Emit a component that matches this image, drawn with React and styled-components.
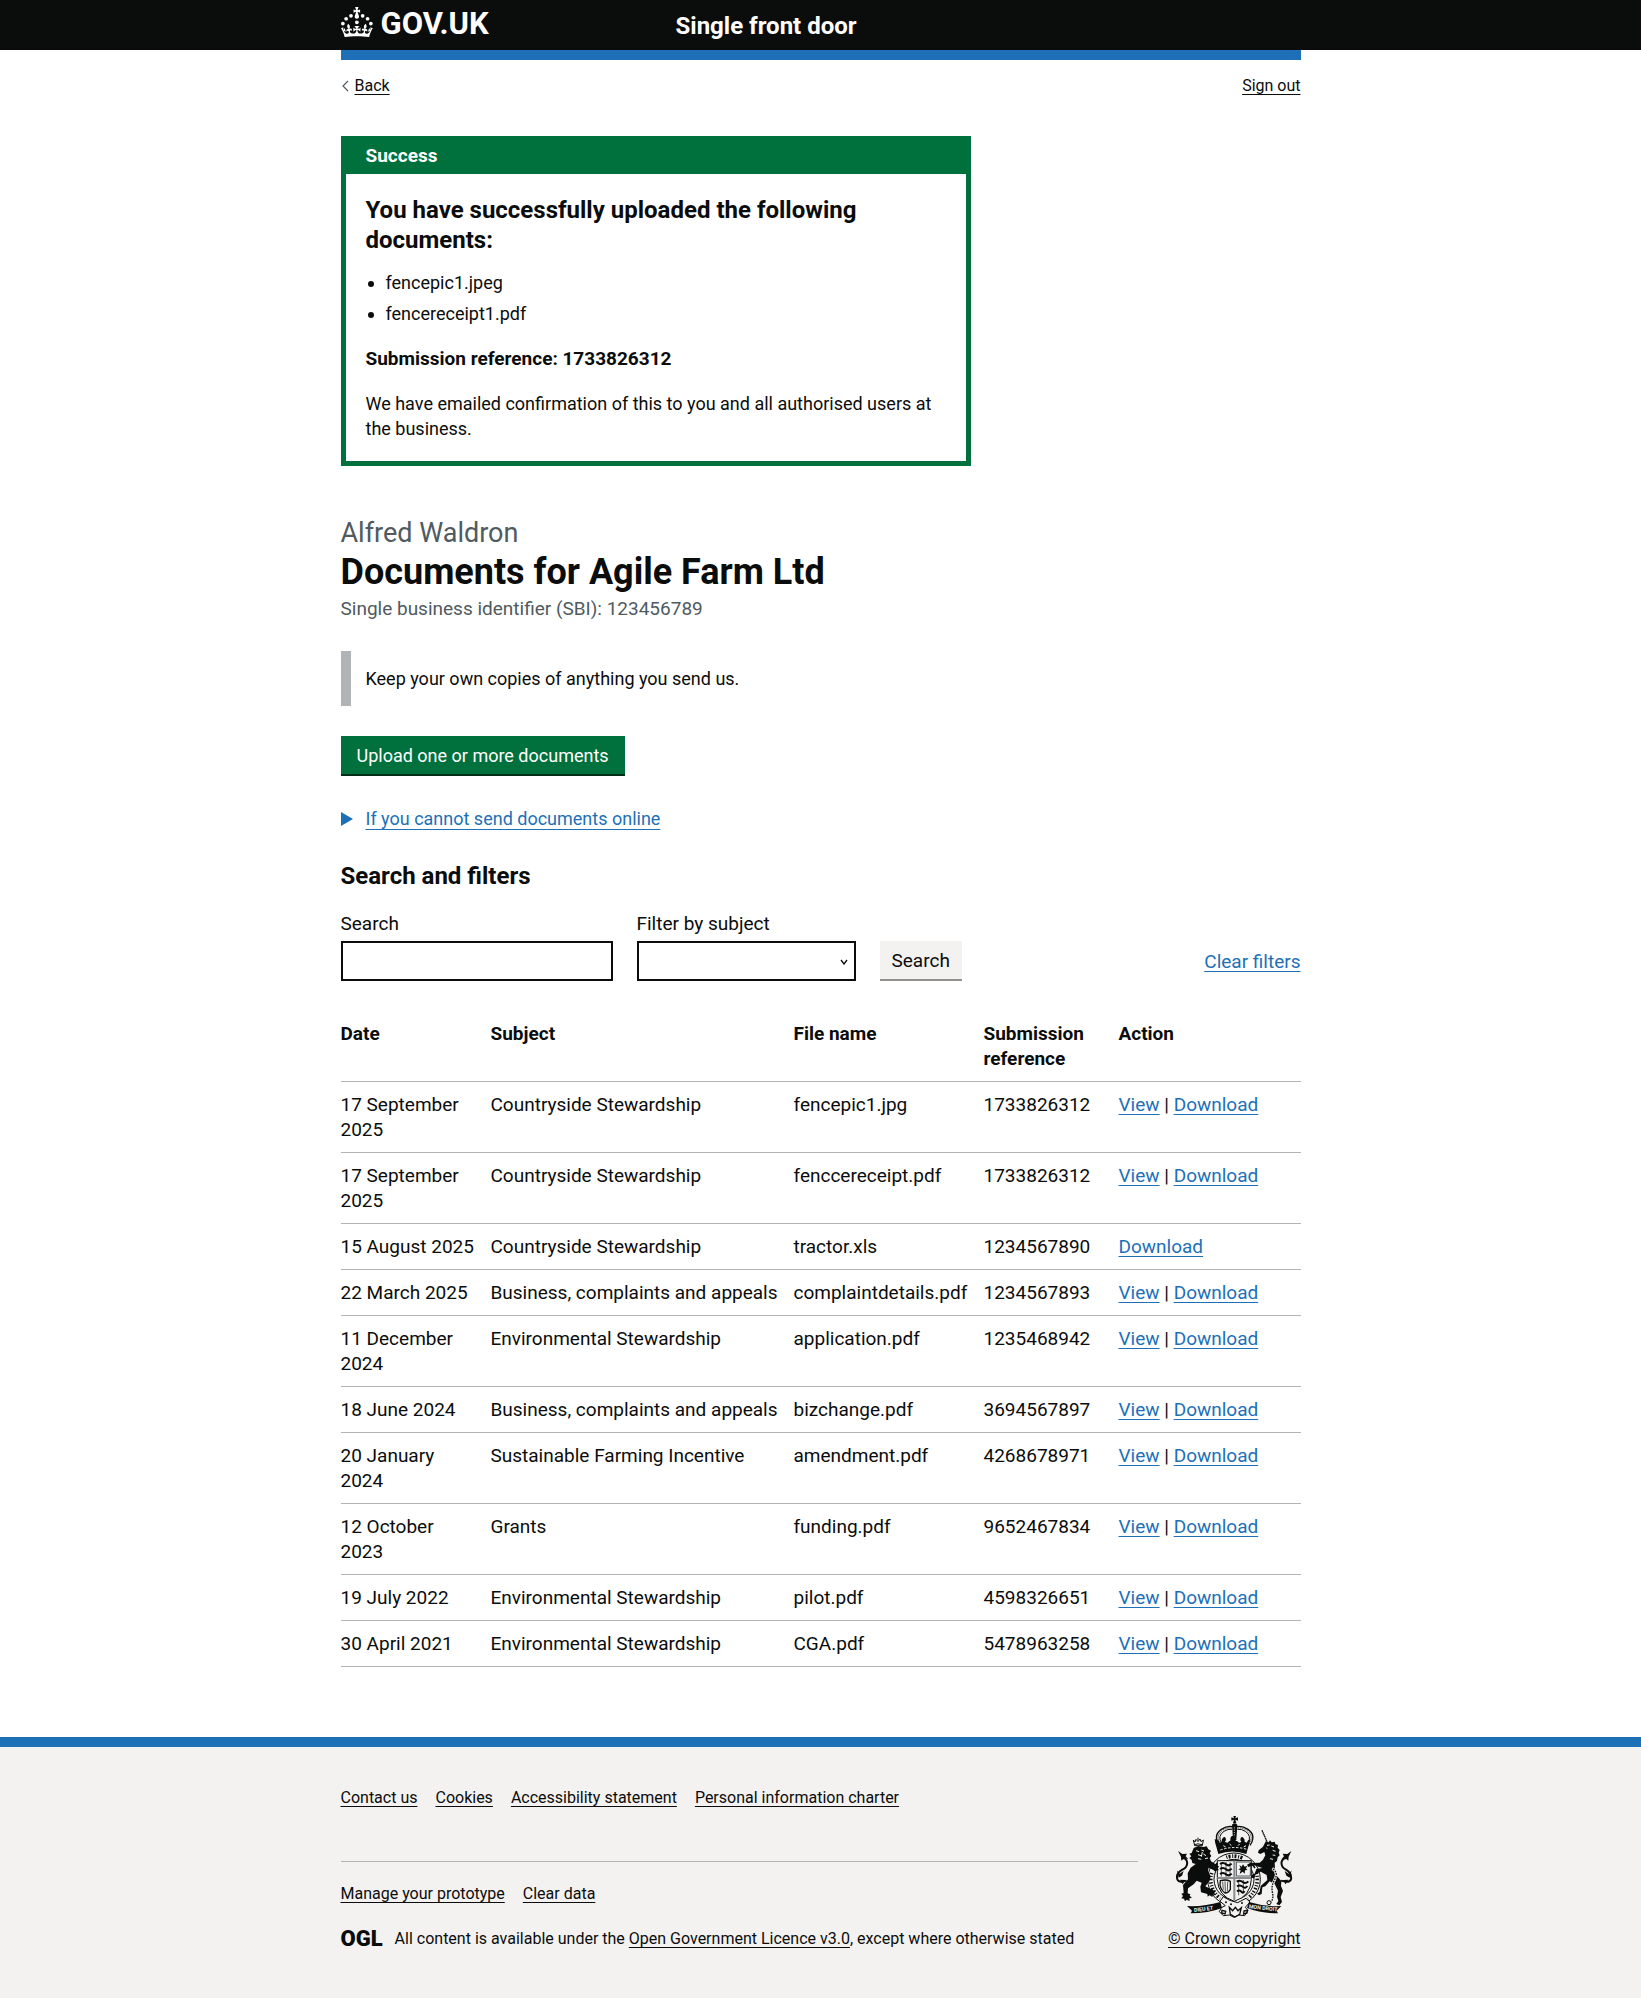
import React from "react";
import styled, { createGlobalStyle } from "styled-components";

const ink = "#0b0c0c";
const blue = "#1d70b8";
const green = "#00703c";
const grey = "#b1b4b6";
const muted = "#505a5f";
const pale = "#f3f2f1";
const font = 'Roboto, "Liberation Sans", Arial, sans-serif';

const GlobalStyle = createGlobalStyle`
  *, *::before, *::after { box-sizing: border-box; }
  body { margin: 0; background: ${pale}; color: ${ink}; font-family: ${font}; font-size: 19px; line-height: 25px; }
  h1, h2, p, ul { margin: 0; }
  input, select, button { font: inherit; color: inherit; }
`;

const Page = styled.div`
  background: #fff;
`;

const Container = styled.div`
  max-width: 960px;
  margin: 0 auto;
`;

const HeaderBar = styled.header`
  background: ${ink};
  color: #fff;
`;

const HeaderInner = styled(Container)`
  display: grid;
  grid-template-columns: 335px 1fr;
  align-items: center;
  height: 50px;
`;

const LogoLink = styled.a`
  display: flex;
  align-items: flex-start;
  gap: 8px;
  padding-bottom: 2px;
  color: #fff;
  text-decoration: none;
  font-size: 31px;
  line-height: 34px;
  font-weight: 700;

  svg { display: block; fill: currentColor; }
`;

const ServiceName = styled.a`
  display: inline-block;
  padding-top: 2px;
  color: #fff;
  font-size: 24px;
  line-height: 30px;
  font-weight: 700;
  text-decoration: none;
`;

const BrandStrip = styled(Container)`
  height: 10px;
  background: ${blue};
`;

const TopLinks = styled.nav`
  display: flex;
  justify-content: space-between;
  padding: 16px 0 0;
  font-size: 16px;
  line-height: 20px;
`;

const BackItem = styled.span`
  display: flex;
  align-items: center;
  gap: 6px;
`;

const Link = styled.a`
  color: ${(p) => (p.$plain ? ink : blue)};
  text-decoration: underline;
  text-decoration-thickness: 1px;
  text-underline-offset: 3px;
`;

const Main = styled.main`
  padding: 40px 0 70px;
`;

const Banner = styled.section`
  width: 630px;
  max-width: 100%;
  border: 5px solid ${green};
`;

const BannerTitle = styled.h2`
  padding: 2px 20px 6px;
  background: ${green};
  color: #fff;
  font-size: 19px;
  line-height: 25px;
`;

const BannerBody = styled.div`
  padding: 21px 20px 20px;
`;

const BannerHeading = styled.p`
  margin-bottom: 15px;
  font-size: 24px;
  line-height: 30px;
  font-weight: 700;
`;

const FileList = styled.ul`
  display: grid;
  gap: 6px;
  margin-bottom: 20px;
  padding-left: 20px;
  font-size: 18px;
`;

const Paragraph = styled.p`
  font-size: 18px;
`;

const Reference = styled.p`
  margin-bottom: 20px;
  font-weight: 700;
`;

const TitleBlock = styled.div`
  margin: 52px 0 30px;
  color: ${muted};
`;

const Caption = styled.p`
  font-size: 27px;
  line-height: 30px;
`;

const Title = styled.h1`
  margin: 4px 0;
  color: ${ink};
  font-size: 36px;
  line-height: 40px;
`;

const Inset = styled.div`
  margin-bottom: 30px;
  padding: 15px;
  border-left: 10px solid ${grey};
  font-size: 18px;
`;

const Button = styled.button`
  height: 38px;
  padding: ${(p) => (p.$secondary ? "0 12px" : "0 16px")};
  border: 0;
  border-radius: 0;
  background: ${(p) => (p.$secondary ? pale : green)};
  color: ${(p) => (p.$secondary ? ink : "#fff")};
  box-shadow: 0 2px 0 ${(p) => (p.$secondary ? "#929191" : "#002d18")};
  font-size: ${(p) => (p.$secondary ? 19 : 18)}px;
  cursor: pointer;
`;

const HelpDetails = styled.details`
  margin: 32px 0 30px;
`;

const HelpSummary = styled.summary`
  display: flex;
  align-items: center;
  gap: 13px;
  list-style: none;
  color: ${blue};
  font-size: 18px;
  cursor: pointer;

  &::before {
    content: "";
    border-style: solid;
    border-width: 7px 0 7px 12px;
    border-color: transparent transparent transparent ${blue};
  }

  span {
    text-decoration: underline;
    text-decoration-thickness: 1px;
    text-underline-offset: 4px;
  }
`;

const SectionTitle = styled.h2`
  margin-bottom: 20px;
  font-size: 24px;
  line-height: 30px;
`;

const Filters = styled.form`
  display: flex;
  align-items: flex-end;
  gap: 24px;
  margin-bottom: 30px;
`;

const Field = styled.div`
  display: flex;
  flex-direction: column;
  gap: 5px;
  width: ${(p) => p.$width}px;
`;

const TextInput = styled.input`
  width: 100%;
  height: 40px;
  padding: 5px;
  border: 2px solid ${ink};
  border-radius: 0;
  background: #fff;
`;

const SelectBox = styled.div`
  position: relative;

  svg {
    position: absolute;
    top: 18px;
    right: 8px;
    pointer-events: none;
  }
`;

const Select = styled.select`
  display: block;
  width: 100%;
  height: 40px;
  padding: 5px;
  appearance: none;
  border: 2px solid ${ink};
  border-radius: 0;
  background: #fff;
`;

const FilterActions = styled.div`
  display: flex;
  flex: 1;
  align-items: center;
  justify-content: space-between;
  height: 40px;

  button { align-self: flex-start; }
`;

const Table = styled.table`
  width: 100%;
  border-collapse: collapse;
  table-layout: fixed;

  th, td {
    padding: 10px 15px 10px 0;
    border-bottom: 1px solid ${grey};
    text-align: left;
    vertical-align: top;
  }
`;

const Col = styled.col`
  width: ${(p) => p.$width};
`;

const Footer = styled.footer`
  padding: 41px 0 47px;
  border-top: 10px solid ${blue};
  background: ${pale};
  font-size: 16px;
  line-height: 20px;
`;

const FooterInner = styled(Container)`
  display: flex;
  align-items: flex-end;
  gap: 30px;
`;

const FooterMain = styled.div`
  flex: 1;
`;

const FooterLinks = styled.ul`
  display: flex;
  flex-wrap: wrap;
  gap: 18px;
  padding: 0;
  list-style: none;
`;

const Rule = styled.hr`
  height: 1px;
  margin: 53px 0 22px;
  border: 0;
  background: ${grey};
`;

const Licence = styled.div`
  display: flex;
  align-items: center;
  gap: 12px;
  margin-top: 25px;
`;

const Ogl = styled.span`
  font-size: 22px;
  line-height: 20px;
  font-weight: 900;
`;

const Copyright = styled.div`
  display: flex;
  flex-direction: column;
  align-items: center;
  gap: 10px;

  svg { display: block; }
`;

function Crown() {
  return (
    <svg width="32" height="30" viewBox="0 0 64 60" aria-hidden="true">
      <circle cx="20" cy="17.6" r="3.7" />
      <circle cx="10.2" cy="23.5" r="3.7" />
      <circle cx="3.7" cy="33.2" r="3.7" />
      <circle cx="31.7" cy="30.6" r="3.7" />
      <circle cx="43.3" cy="17.6" r="3.7" />
      <circle cx="53.2" cy="23.5" r="3.7" />
      <circle cx="59.7" cy="33.2" r="3.7" />
      <path d="M33.1,9.8c.2-.1.3-.3.5-.5l4.6,2.4v-6.8l-4.6,1.5c-.1-.2-.3-.3-.5-.5l1.9-5.9h-6.7l1.9,5.9c-.2.1-.3.3-.5.5l-4.6-1.5v6.8l4.6-2.4c.1.2.3.3.5.5l-2.6,8c-.9,2.8,1.2,5.7,4.1,5.7h0c3,0,5.1-2.9,4.1-5.7l-2.6-8ZM37,37.9s-3.4,3.8-4.1,6.1c2.2,0,4.2-.5,6.4-2.8l-.7,8.5c-2-2.8-4.4-4.1-5.7-3.8.1,3.1.5,6.7,5.8,7.2,3.7.3,6.7-1.5,7-3.8.4-2.6-2-4.3-3.7-1.6-1.4-4.5,2.4-6.1,4.9-3.2-1.9-4.5-1.8-7.7,2.4-10.9,3,4,2.6,7.3-1.2,11.1,2.4-1.3,6.2,0,4,4.6-1.2-2.8-3.7-2.2-4.2.2-.3,1.7.7,3.7,3,4.2,1.9.3,4.7-.9,7-5.9-1.3,0-2.4.7-3.9,1.7l2.4-8c.6,2.3,1.4,3.7,2.2,4.5.6-1.6.5-2.8,0-5.3l5,1.8c-2.6,3.6-5.2,8.7-7.3,17.5-7.4-1.1-15.7-1.7-24.5-1.7h0c-8.8,0-17.1.6-24.5,1.7-2.1-8.9-4.7-13.9-7.3-17.5l5-1.8c-.5,2.5-.6,3.7,0,5.3.8-.8,1.6-2.3,2.2-4.5l2.4,8c-1.5-1-2.6-1.7-3.9-1.7,2.3,5,5.2,6.2,7,5.9,2.3-.4,3.3-2.4,3-4.2-.5-2.4-3-3.1-4.2-.2-2.2-4.6,1.6-6,4-4.6-3.7-3.7-4.2-7.1-1.2-11.1,4.2,3.2,4.3,6.4,2.4,10.9,2.5-2.8,6.3-1.3,4.9,3.2-1.8-2.7-4.1-1-3.7,1.6.3,2.3,3.3,4.1,7,3.8,5.4-.5,5.7-4.2,5.8-7.2-1.3-.2-3.7,1-5.7,3.8l-.7-8.5c2.2,2.3,4.2,2.7,6.4,2.8-.7-2.3-4.1-6.1-4.1-6.1h10.6Z" />
    </svg>
  );
}

function BackChevron() {
  return (
    <svg width="8" height="12" viewBox="0 0 8 12" fill="none" stroke={muted} strokeWidth="1.2" aria-hidden="true">
      <path d="M7 1 2 6l5 5" />
    </svg>
  );
}

function SelectChevron() {
  return (
    <svg width="8" height="6" viewBox="0 0 8 6" fill="none" stroke={ink} strokeWidth="1.3" aria-hidden="true">
      <path d="M1 1l3 4 3-4" />
    </svg>
  );
}

/* Royal coat of arms: crown, garter and quartered shield, lion, unicorn, motto ribbons */
function Crest() {
  return (
    <svg width="118" height="104" viewBox="51 45 354 312" fill={ink} aria-hidden="true">
      {/* cross and arches of the crown */}
      <path d="M226 48h8l-2 7 8-3v10l-8-3 3 10h-10l3-10-8 3V52l8 3Z" />
      <path d="M222 74q8-8 16 0l-3 46h-10Z" />
      <path d="M229 82v32" stroke={pale} strokeWidth="2.5" strokeDasharray="3 4" />
      <g fill="none" stroke={ink}>
        <path d="M184 136Q164 106 190 88q18-12 34-8" strokeWidth="4" />
        <path d="M191 130Q177 108 198 94q12-8 24-6" strokeWidth="3" />
        <path d="M187 132Q171 107 194 91q14-9 28-7" strokeWidth="3" strokeDasharray="3 3" />
        <path d="M276 136Q296 106 270 88q-18-12-34-8" strokeWidth="4" />
        <path d="M269 130Q283 108 262 94q-12-8-24-6" strokeWidth="3" />
        <path d="M273 132Q289 107 266 91q-14-9-28-7" strokeWidth="3" strokeDasharray="3 3" />
      </g>
      <path d="M176 118q7 2 9 10l6-3q-1-7 4-12 5-5 8 1 3 6-2 12l8 2q4-6 8-6-2-8 4-14h8q6 6 4 14 6 0 10 6l7-2q-5-6-2-12 4-6 8-1 5 5 4 12l6 3q2-8 11-10-2 12-6 22l-6 22q-42-15-84 0l-6-22q-4-10-5-22Z" />
      <path d="M187 150q43-15 86 0" fill="none" stroke={pale} strokeWidth="3" strokeDasharray="7 5" />
      <path d="M196 137l7 4M215 132l5 5M240 137l5-5M257 141l7-4" stroke={pale} strokeWidth="3" />

      {/* garter */}
      <g fill="none" stroke={ink}>
        <circle cx="228" cy="238" r="79" strokeWidth="3" />
        <circle cx="228" cy="238" r="60" strokeWidth="3" />
        <path d="M205 172q22-8 48 2" strokeWidth="11" strokeDasharray="3 4 6 5" />
        <path d="M161 219a70 70 0 0 0 26 76" strokeWidth="11" strokeDasharray="4 5 3 5 5 6" />
        <path d="M295 219a70 70 0 0 1-26 76" strokeWidth="11" strokeDasharray="4 5 3 5 5 6" />
        <path d="M178 189l-12 16M281 190l10 14" strokeWidth="5" />
      </g>

      {/* quartered shield */}
      <path d="M178 182h102v56q-2 50-51 66-49-16-51-66Z" fill={pale} stroke={ink} strokeWidth="3" />
      <g fill="none" stroke={ink} strokeWidth="6">
        <path d="M186 192q10-6 18 1t17-2M186 207q10-6 18 1t17-2M186 222q10-6 18 1t17-2" />
        <path d="M236 245q10-6 18 1t17-2M237 259q10-6 17 1t14-2M237 274q8-6 13 1t9-2" />
        <path d="M190 188v42M204 186v45M216 187v43M242 240v46M256 240v38" strokeWidth="2" />
      </g>
      <path d="M235 186h42v42h-42Z" fill="none" stroke={muted} strokeWidth="3" />
      <path d="M244 195l7 5 4-7 5 7 8-3-4 9 5 4-8 1-1 10-6-6-9 7 3-11-7-3 7-3Z" />
      <path d="M187 242q18-5 30 2v24q-6 11-16 11-12-8-15-24Z" fill="none" stroke={ink} strokeWidth="4" />
      <path d="M194 245l2 24M201 244l1 32M209 245l-1 28" stroke={ink} strokeWidth="2" />
      <path d="M229 182v120M178 234h102" stroke="#8a8c8d" strokeWidth="6" />

      {/* lion */}
      <path d="M106 120l5 6 3-8 6 7 6-8 3 8 7-5-3 17h-23Z" fill="none" stroke={ink} strokeWidth="3" />
      <path d="M120 113v8M109 134q11-5 23 0" stroke={ink} strokeWidth="3" fill="none" />
      <path d="M107 144l14-6 15 3 10-2 5 9 8 4-4 8 5 8-5 6 4 10 14 9 7-3-2 8 6 1-5 6 4 6-8-1-2 6-7-6-14-7-2 10 8 16-4 15-12 15 16 8 4-4 3 8 7 0-3 8 5 6-9-1-2 7-8-5-6 4-1-8-19-5-2-17 4-12-15-6-9 11-17 12-1 15 8 3-2 4 7 7-8 1 1 8-9-4-5 5-3-8-8-1 5-7-5-7 7-2-2-24 15-17-1-18 9-17 15-11-10-3-2-9-7-6 6-5-6-8 7-2Z" />
      <path d="M114 152l9 3M130 150l8 3M120 164l12 4M136 162l8 5M120 176l10 2M141 176l9-2M133 156l-3 14" stroke={pale} strokeWidth="3" />
      <path d="M86 242q-23 8-28-4-5-18 15-29 17-8 14-24-3-13-17-11" fill="none" stroke={ink} strokeWidth="6" />
      <path d="M60 153l13 9 14-1-4 8 8 8-12-2-9 7-1-12ZM57 211l8 10 12-8-5 14-10 6ZM66 239l8 14 8-13Z" />

      {/* unicorn */}
      <path d="M312 91l15 34" stroke={ink} strokeWidth="4" strokeDasharray="5 1" />
      <path d="M324 124l8 3 4-6 5 6 9-2 2 7 8 3-1 8 6 7-3 8 3 8-6 6-2 11-7 5 1 20 6 20 13 15-1 15 6 15-7 18 4 15-8 10-9-4 6-9-4-13 3-18-10-20-15-8-13 15-9 3-2 20-8 4-6-5 8-6 3-17 20-18-2-15-18-10-15 7-4 13-10-2 3-9 8-3 5-14 18-3-25-8-17 5-4-7 9-5 29-1 10-9 7-13-3-10-12 6-7-4 2-7 13-11 7-14Z" />
      <path d="M327 136l8-1M340 138l8 3M344 151l9 3M344 165l8 1M336 176l9 2M325 144l3 1" stroke={pale} strokeWidth="3" />
      <path d="M343 205q18 12 8 32-12 20-8 39 5 18-4 30" fill="none" stroke={pale} strokeWidth="8" />
      <path d="M345 207q16 12 6 30-12 20-8 39 5 18-4 30" fill="none" stroke={ink} strokeWidth="4" strokeDasharray="5 3" />
      <circle cx="333" cy="308" r="6" fill={pale} stroke={ink} strokeWidth="3" />
      <path d="M369 242q26 8 30-4 3-18-15-29-16-8-13-24 4-13 18-11" fill="none" stroke={ink} strokeWidth="6" />
      <path d="M400 153l-12 9-14-1 4 8-7 8 11-2 9 7 1-12ZM401 211l-9 10-12-8 5 14 10 6ZM391 239l-8 14-8-13Z" />

      {/* buckle, strap and roses beneath the shield */}
      <path d="M186 304l10-14 19 11 24 7 25-13 12 11-14 16 8 9-10 16-18-2-14 7-14-7-18 2-12-12 6-12 12-6Z" fill={pale} stroke={ink} strokeWidth="3" />
      <path d="M214 322l10 10 8-10 8 10 10-9-5 20-14 8-14-8ZM192 331l11 3-2 8-10-3ZM258 333l10-2-1 8-10 3Z" fill="none" stroke={ink} strokeWidth="4" />
      <circle cx="204" cy="307" r="3" /><circle cx="219" cy="313" r="3" /><circle cx="252" cy="309" r="3" />

      {/* motto ribbons */}
      <path d="M87 318q48 3 100-12l5 18q-41 16-94 16l4-8Z" />
      <path d="M370 318q-48 3-97-12l-6 18q42 16 93 16l-4-8Z" />
      <g fill={pale} fontFamily={font} fontWeight="700" fontSize="16">
        <text x="109" y="336" transform="rotate(-7 109 336)">DIEU ET</text>
        <text x="272" y="325" transform="rotate(6 272 325)">MON DROIT</text>
      </g>
    </svg>
  );
}

const documents = [
  ["17 September 2025", "Countryside Stewardship", "fencepic1.jpg", "1733826312", true],
  ["17 September 2025", "Countryside Stewardship", "fenccereceipt.pdf", "1733826312", true],
  ["15 August 2025", "Countryside Stewardship", "tractor.xls", "1234567890", false],
  ["22 March 2025", "Business, complaints and appeals", "complaintdetails.pdf", "1234567893", true],
  ["11 December 2024", "Environmental Stewardship", "application.pdf", "1235468942", true],
  ["18 June 2024", "Business, complaints and appeals", "bizchange.pdf", "3694567897", true],
  ["20 January 2024", "Sustainable Farming Incentive", "amendment.pdf", "4268678971", true],
  ["12 October 2023", "Grants", "funding.pdf", "9652467834", true],
  ["19 July 2022", "Environmental Stewardship", "pilot.pdf", "4598326651", true],
  ["30 April 2021", "Environmental Stewardship", "CGA.pdf", "5478963258", true],
];

export default function App() {
  return (
    <Page>
      <GlobalStyle />
      <HeaderBar>
        <HeaderInner>
          <LogoLink href="#"><Crown />GOV.UK</LogoLink>
          <div><ServiceName href="#">Single front door</ServiceName></div>
        </HeaderInner>
      </HeaderBar>
      <BrandStrip />
      <Container>
        <TopLinks>
          <BackItem><BackChevron /><Link $plain href="#">Back</Link></BackItem>
          <Link $plain href="#">Sign out</Link>
        </TopLinks>
        <Main>
          <Banner>
            <BannerTitle>Success</BannerTitle>
            <BannerBody>
              <BannerHeading>You have successfully uploaded the following documents:</BannerHeading>
              <FileList>
                <li>fencepic1.jpeg</li>
                <li>fencereceipt1.pdf</li>
              </FileList>
              <Reference>Submission reference: 1733826312</Reference>
              <Paragraph>We have emailed confirmation of this to you and all authorised users at the business.</Paragraph>
            </BannerBody>
          </Banner>
          <TitleBlock>
            <Caption>Alfred Waldron</Caption>
            <Title>Documents for Agile Farm Ltd</Title>
            <p>Single business identifier (SBI): 123456789</p>
          </TitleBlock>
          <Inset>Keep your own copies of anything you send us.</Inset>
          <Button type="button">Upload one or more documents</Button>
          <HelpDetails>
            <HelpSummary><span>If you cannot send documents online</span></HelpSummary>
          </HelpDetails>
          <SectionTitle>Search and filters</SectionTitle>
          <Filters onSubmit={(e) => e.preventDefault()}>
            <Field $width={272}>
              <label htmlFor="search">Search</label>
              <TextInput id="search" type="text" />
            </Field>
            <Field $width={219}>
              <label htmlFor="subject">Filter by subject</label>
              <SelectBox>
                <Select id="subject"><option></option></Select>
                <SelectChevron />
              </SelectBox>
            </Field>
            <FilterActions>
              <Button $secondary type="submit">Search</Button>
              <Link href="#">Clear filters</Link>
            </FilterActions>
          </Filters>
          <Table>
            <colgroup>
              <Col $width="150px" />
              <Col $width="303px" />
              <Col $width="190px" />
              <Col $width="135px" />
              <Col />
            </colgroup>
            <thead>
              <tr>
                <th scope="col">Date</th>
                <th scope="col">Subject</th>
                <th scope="col">File name</th>
                <th scope="col">Submission reference</th>
                <th scope="col">Action</th>
              </tr>
            </thead>
            <tbody>
              {documents.map(([date, subject, file, reference, viewable]) => (
                <tr key={file}>
                  <td>{date}</td>
                  <td>{subject}</td>
                  <td>{file}</td>
                  <td>{reference}</td>
                  <td>
                    {viewable && <><Link href="#">View</Link> | </>}
                    <Link href="#">Download</Link>
                  </td>
                </tr>
              ))}
            </tbody>
          </Table>
        </Main>
      </Container>
      <Footer>
        <FooterInner>
          <FooterMain>
            <FooterLinks>
              <li><Link $plain href="#">Contact us</Link></li>
              <li><Link $plain href="#">Cookies</Link></li>
              <li><Link $plain href="#">Accessibility statement</Link></li>
              <li><Link $plain href="#">Personal information charter</Link></li>
            </FooterLinks>
            <Rule />
            <FooterLinks>
              <li><Link $plain href="#">Manage your prototype</Link></li>
              <li><Link $plain href="#">Clear data</Link></li>
            </FooterLinks>
            <Licence>
              <Ogl>OGL</Ogl>
              <span>
                All content is available under the <Link $plain href="#">Open Government Licence v3.0</Link>, except where otherwise stated
              </span>
            </Licence>
          </FooterMain>
          <Copyright>
            <Crest />
            <Link $plain href="#">© Crown copyright</Link>
          </Copyright>
        </FooterInner>
      </Footer>
    </Page>
  );
}
